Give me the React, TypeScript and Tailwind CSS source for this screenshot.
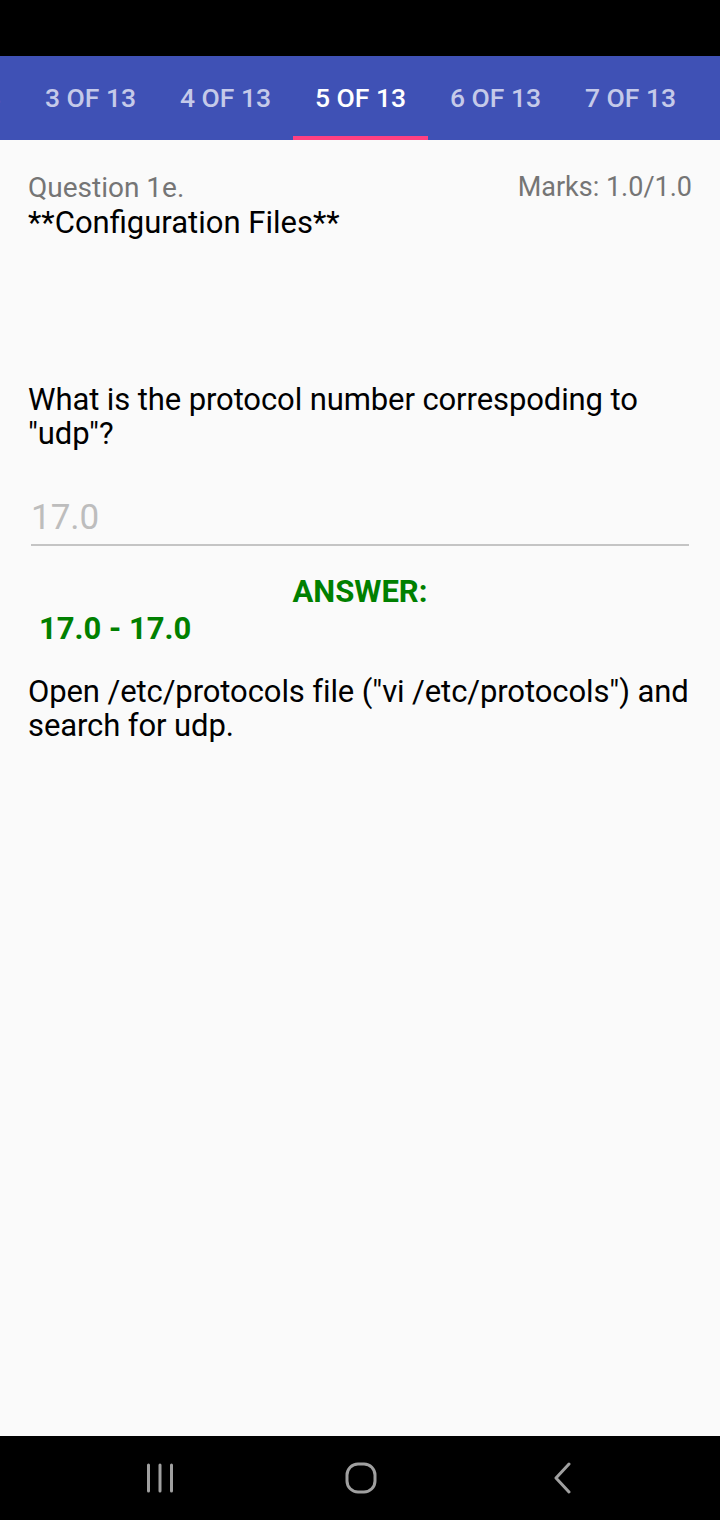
import { useState } from 'react'

const tabs = ['2 OF 13', '3 OF 13', '4 OF 13', '5 OF 13', '6 OF 13', '7 OF 13', '8 OF 13']

const NavBar = () => (
  <div className="flex h-[84px] items-center gap-[141px] bg-black pl-[130px] text-[#a0a0a0]">
    <div className="flex w-[60px] justify-center">
      <svg width="30" height="30" viewBox="0 0 30 30">
        <path d="M3.5 2v26M15 2v26M26.5 2v26" stroke="currentColor" strokeWidth="3" strokeLinecap="round" />
      </svg>
    </div>
    <div className="flex w-[60px] justify-center">
      <svg width="32" height="32" viewBox="0 0 32 32">
        <rect x="2" y="2" width="28" height="28" rx="11" fill="none" stroke="currentColor" strokeWidth="3" />
      </svg>
    </div>
    <div className="flex w-[60px] justify-center">
      <svg width="22" height="32" viewBox="0 0 22 32">
        <path d="M18 2L5 16l13 14" fill="none" stroke="currentColor" strokeWidth="3" strokeLinecap="round" strokeLinejoin="round" />
      </svg>
    </div>
  </div>
)

export default function App() {
  const [answer] = useState('17.0')

  return (
    <div className="flex h-[1520px] w-[720px] flex-col bg-[#fafafa] font-['Roboto',sans-serif]">
      <div className="h-[56px] bg-black" />
      <div className="h-[84px] overflow-hidden bg-[#3f51b5]">
        <div className="ml-[-112px] flex h-full">
          {tabs.map((t) => {
            const active = t === '5 OF 13'
            return (
              <div
                key={t}
                className={`flex h-full w-[135px] shrink-0 flex-col items-center justify-between ${active ? 'text-white' : 'text-[#c5cae9]'}`}
              >
                <div className="h-1" />
                <span className="whitespace-nowrap text-[26.5px] font-medium">{t}</span>
                <div className={`h-1 w-full ${active ? 'bg-[#ff4081]' : ''}`} />
              </div>
            )
          })}
        </div>
      </div>

      <div className="flex-1 px-[28px] pt-[30px]">
        <div className="flex items-start justify-between">
          <div>
            <p className="text-[28px] leading-[35px] text-[#757575]">Question 1e.</p>
            <p className="text-[31px] leading-[35px] text-black">**Configuration Files**</p>
          </div>
          <p className="text-[27px] leading-[35px] text-[#757575]">Marks: 1.0/1.0</p>
        </div>

        <p className="mt-[143px] text-[31px] leading-[34px] tracking-[-0.1px] text-black">
          What is the protocol number correspoding to "udp"?
        </p>

        <div className="mx-[3px] mt-[47px] border-b-2 border-[#c4c4c4] pb-[6px]">
          <span className="text-[35px] leading-[40px] text-[#bdbdbd]">{answer}</span>
        </div>

        <p className="mt-[29px] text-center text-[31px] font-bold leading-[34px] text-[#008000]">ANSWER:</p>
        <p className="ml-[11px] mt-[2px] text-[31px] font-bold leading-[36px] text-[#008000]">17.0 - 17.0</p>

        <p className="mt-[28px] text-[31px] leading-[34px] tracking-[-0.1px] text-black">
          Open /etc/protocols file ("vi /etc/protocols") and search for udp.
        </p>
      </div>

      <NavBar />
    </div>
  )
}
